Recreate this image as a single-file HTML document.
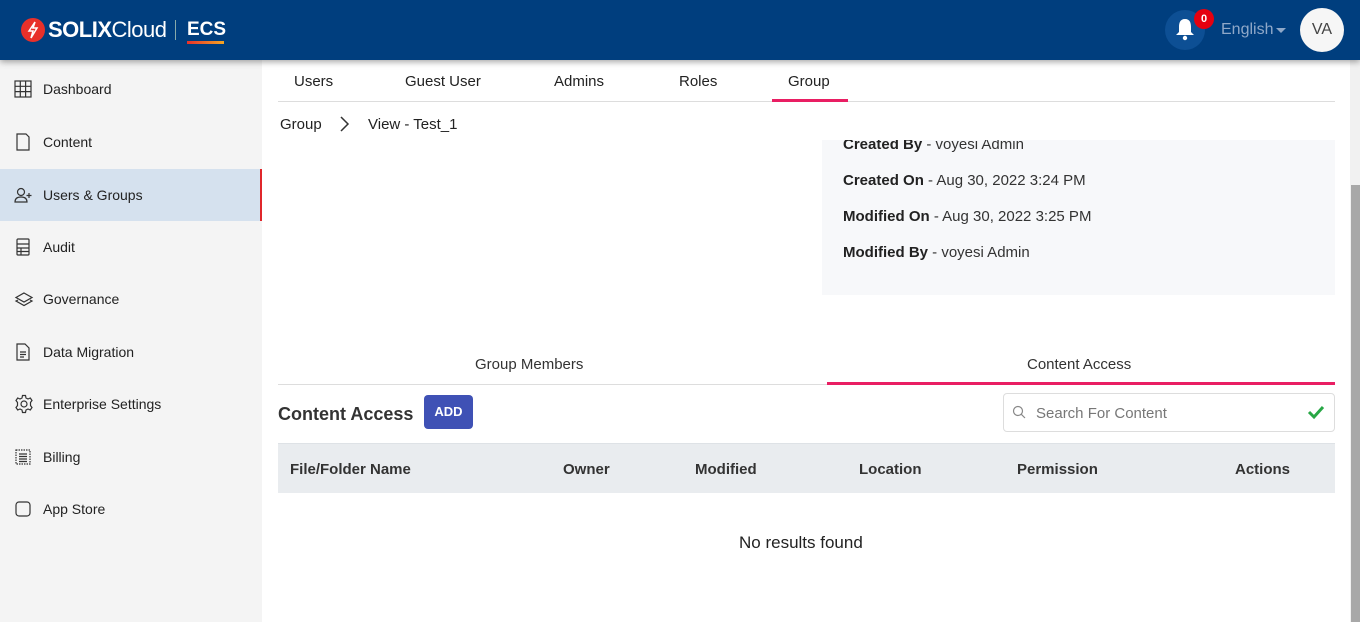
<!DOCTYPE html>
<html><head><style>
*{box-sizing:border-box;margin:0;padding:0}
body{width:1360px;height:622px;overflow:hidden;font-family:"Liberation Sans",sans-serif;background:#fff;position:relative;color:#212529}
.hdr{position:absolute;left:0;top:0;width:1360px;height:60px;background:#003e7e;box-shadow:0 2px 6px rgba(0,0,0,.35);z-index:5}
.side{position:absolute;left:0;top:60px;width:262px;height:562px;background:#f4f4f4}
.item{position:absolute;left:0;width:262px;height:52px;display:flex;align-items:center;font-size:14px;color:#222}
.item svg{position:absolute;left:14px}
.item span{position:absolute;left:43px}
.act{background:#d5e1ee;border-right:2px solid #e0262b}
.abs{position:absolute}
.tab{position:absolute;top:72px;font-size:15px;color:#222}
.th{position:absolute;top:460px;font-size:15px;font-weight:bold;color:#333}
.info{position:absolute;left:843px;font-size:15px;color:#333}
.info b{color:#222}
</style></head><body>
<div class="hdr">
  <svg class="abs" style="left:21px;top:18px" width="24" height="24" viewBox="0 0 24 24"><circle cx="12" cy="12" r="12" fill="#e8302a"/><path d="M14 4 L8 13 H12 L10 20 L16 10 H12 Z" fill="none" stroke="#fff" stroke-width="1.5"/></svg>
  <div class="abs" style="left:48px;top:17px;font-size:22px;color:#fff;letter-spacing:-0.5px"><b>SOLIX</b>Cloud</div>
  <div class="abs" style="left:175px;top:20px;width:1px;height:20px;background:#8aa"></div>
  <div class="abs" style="left:187px;top:19px;font-size:19px;font-weight:bold;color:#fff">ECS</div>
  <div class="abs" style="left:187px;top:41px;width:37px;height:3px;background:linear-gradient(90deg,#e8302a,#f5a623)"></div>
  <div class="abs" style="left:1165px;top:10px;width:40px;height:40px;border-radius:50%;background:#0d4f94"></div>
  <svg class="abs" style="left:1174px;top:17px" width="22" height="24" viewBox="0 0 22 24"><path d="M11 2 C6 2 5 6 5 10 V15 L2 18 H20 L17 15 V10 C17 6 16 2 11 2Z" fill="#fff"/><circle cx="11" cy="21" r="2.2" fill="#fff"/></svg>
  <div class="abs" style="left:1194px;top:9px;width:20px;height:20px;border-radius:50%;background:#e5000f;color:#fff;font-size:11px;font-weight:bold;text-align:center;line-height:20px">0</div>
  <div class="abs" style="left:1221px;top:21px;font-size:16px;color:#8fa8c8">English</div>
  <div class="abs" style="left:1276px;top:28px;width:0;height:0;border-left:5px solid transparent;border-right:5px solid transparent;border-top:5px solid #8fa8c8"></div>
  <div class="abs" style="left:1300px;top:8px;width:44px;height:44px;border-radius:50%;background:#f6f6f6;color:#444;font-size:16px;text-align:center;line-height:44px">VA</div>
</div>
<div class="side">
  <div class="item" style="top:3px"><svg width="18" height="18" viewBox="0 0 18 18" fill="none" stroke="#333" stroke-width="1.2"><rect x="1" y="1" width="16" height="16"/><path d="M6.3 1V17M11.6 1V17M1 6.3H17M1 11.6H17"/></svg><span>Dashboard</span></div>
  <div class="item" style="top:56px"><svg width="18" height="18" viewBox="0 0 18 18" fill="none" stroke="#333" stroke-width="1.2"><path d="M3 1H12L15 4V17H3Z"/></svg><span>Content</span></div>
  <div class="item act" style="top:109px"><svg width="20" height="18" viewBox="0 0 20 18" fill="none" stroke="#333" stroke-width="1.2"><circle cx="7" cy="6" r="3.5"/><path d="M1 16C1 12 4 11 7 11S13 12 13 16Z"/><path d="M15 7V12M12.5 9.5H17.5"/></svg><span>Users &amp; Groups</span></div>
  <div class="item" style="top:161px"><svg width="18" height="18" viewBox="0 0 18 18" fill="none" stroke="#333" stroke-width="1.2"><rect x="3" y="1" width="12" height="16" rx="1"/><path d="M3 6H15M3 10H15M3 13.5H15M7 10V17"/></svg><span>Audit</span></div>
  <div class="item" style="top:213px"><svg width="20" height="18" viewBox="0 0 20 18" fill="none" stroke="#333" stroke-width="1.2"><path d="M10 3L18 7.5L10 12L2 7.5Z"/><path d="M4 10L2 11L10 15.5L18 11L16 10"/></svg><span>Governance</span></div>
  <div class="item" style="top:266px"><svg width="18" height="18" viewBox="0 0 18 18" fill="none" stroke="#333" stroke-width="1.2"><path d="M3 1H11L15 5V17H3Z"/><path d="M6 9H12M6 11.5H12M6 14H10"/></svg><span>Data Migration</span></div>
  <div class="item" style="top:318px"><svg width="20" height="20" viewBox="0 0 20 20" fill="none" stroke="#333" stroke-width="1.2"><circle cx="10" cy="10" r="3"/><path d="M8.5 1.5H11.5L12 4L14 5L16.3 4L18 6.5L16.5 8.5V11.5L18 13.5L16.3 16L14 15L12 16L11.5 18.5H8.5L8 16L6 15L3.7 16L2 13.5L3.5 11.5V8.5L2 6.5L3.7 4L6 5L8 4Z"/></svg><span>Enterprise Settings</span></div>
  <div class="item" style="top:371px"><svg width="18" height="18" viewBox="0 0 18 18" fill="none" stroke="#333" stroke-width="1.2"><rect x="2" y="2" width="14" height="14" stroke-dasharray="1.5 1"/><path d="M5 6H13M5 8.5H13M5 11H13M5 13.5H13"/></svg><span>Billing</span></div>
  <div class="item" style="top:423px"><svg width="18" height="18" viewBox="0 0 18 18" fill="none" stroke="#333" stroke-width="1.2"><rect x="2" y="2" width="14" height="14" rx="3"/></svg><span>App Store</span></div>
</div>
<div class="tab" style="left:294px;top:73px">Users</div>
<div class="tab" style="left:405px;top:73px">Guest User</div>
<div class="tab" style="left:554px;top:73px">Admins</div>
<div class="tab" style="left:679px;top:73px">Roles</div>
<div class="tab" style="left:788px;top:73px">Group</div>
<div class="abs" style="left:278px;top:101px;width:1057px;height:1px;background:#ddd"></div>
<div class="abs" style="left:772px;top:99px;width:76px;height:3px;background:#e91e63"></div>
<div class="abs" style="left:280px;top:116px;font-size:15px;color:#222">Group</div>
<svg class="abs" style="left:338px;top:115px" width="12" height="18" viewBox="0 0 12 18" fill="none" stroke="#333" stroke-width="1.5"><path d="M3 2L10 9L3 16"/></svg>
<div class="abs" style="left:368px;top:116px;font-size:15px;color:#222">View - Test_1</div>
<div class="abs" style="left:822px;top:140px;width:513px;height:155px;background:#f7f8fa;overflow:hidden">
  <div class="info" style="left:21px;top:-4px"><b>Created By</b> - voyesi Admin</div>
  <div class="info" style="left:21px;top:32px"><b>Created On</b> - Aug 30, 2022 3:24 PM</div>
  <div class="info" style="left:21px;top:68px"><b>Modified On</b> - Aug 30, 2022 3:25 PM</div>
  <div class="info" style="left:21px;top:104px"><b>Modified By</b> - voyesi Admin</div>
</div>
<div class="abs" style="left:475px;top:356px;font-size:15px;color:#333">Group Members</div>
<div class="abs" style="left:1027px;top:356px;font-size:15px;color:#333">Content Access</div>
<div class="abs" style="left:278px;top:384px;width:1057px;height:1px;background:#ddd"></div>
<div class="abs" style="left:827px;top:382px;width:508px;height:3px;background:#e91e63"></div>
<div class="abs" style="left:278px;top:404px;font-size:18px;font-weight:bold;color:#333">Content Access</div>
<div class="abs" style="left:424px;top:395px;width:49px;height:34px;border-radius:4px;background:#3f51b5;color:#fff;font-size:13px;font-weight:bold;text-align:center;line-height:34px">ADD</div>
<div class="abs" style="left:1003px;top:393px;width:332px;height:39px;border:1px solid #ddd;border-radius:4px"></div>
<svg class="abs" style="left:1012px;top:405px" width="14" height="14" viewBox="0 0 14 14" fill="none" stroke="#888" stroke-width="1.2"><circle cx="6" cy="6" r="4.5"/><path d="M9.3 9.3L13 13"/></svg>
<div class="abs" style="left:1036px;top:405px;font-size:15px;color:#777">Search For Content</div>
<svg class="abs" style="left:1307px;top:404px" width="18" height="16" viewBox="0 0 18 16" fill="none" stroke="#28a745" stroke-width="3"><path d="M2 8L7 13L16 3"/></svg>
<div class="abs" style="left:278px;top:443px;width:1057px;height:50px;background:#e9ecef;border-top:1px solid #dee2e6"></div>
<div class="th" style="left:290px;top:461px">File/Folder Name</div>
<div class="th" style="left:563px;top:461px">Owner</div>
<div class="th" style="left:695px;top:461px">Modified</div>
<div class="th" style="left:859px;top:461px">Location</div>
<div class="th" style="left:1017px;top:461px">Permission</div>
<div class="th" style="left:1235px;top:461px">Actions</div>
<div class="abs" style="left:739px;top:533px;font-size:17px;color:#222">No results found</div>
<div class="abs" style="left:1350px;top:60px;width:10px;height:562px;background:#f1f1f1"></div>
<div class="abs" style="left:1351px;top:185px;width:9px;height:437px;background:#a8a8a8"></div>
</body></html>
